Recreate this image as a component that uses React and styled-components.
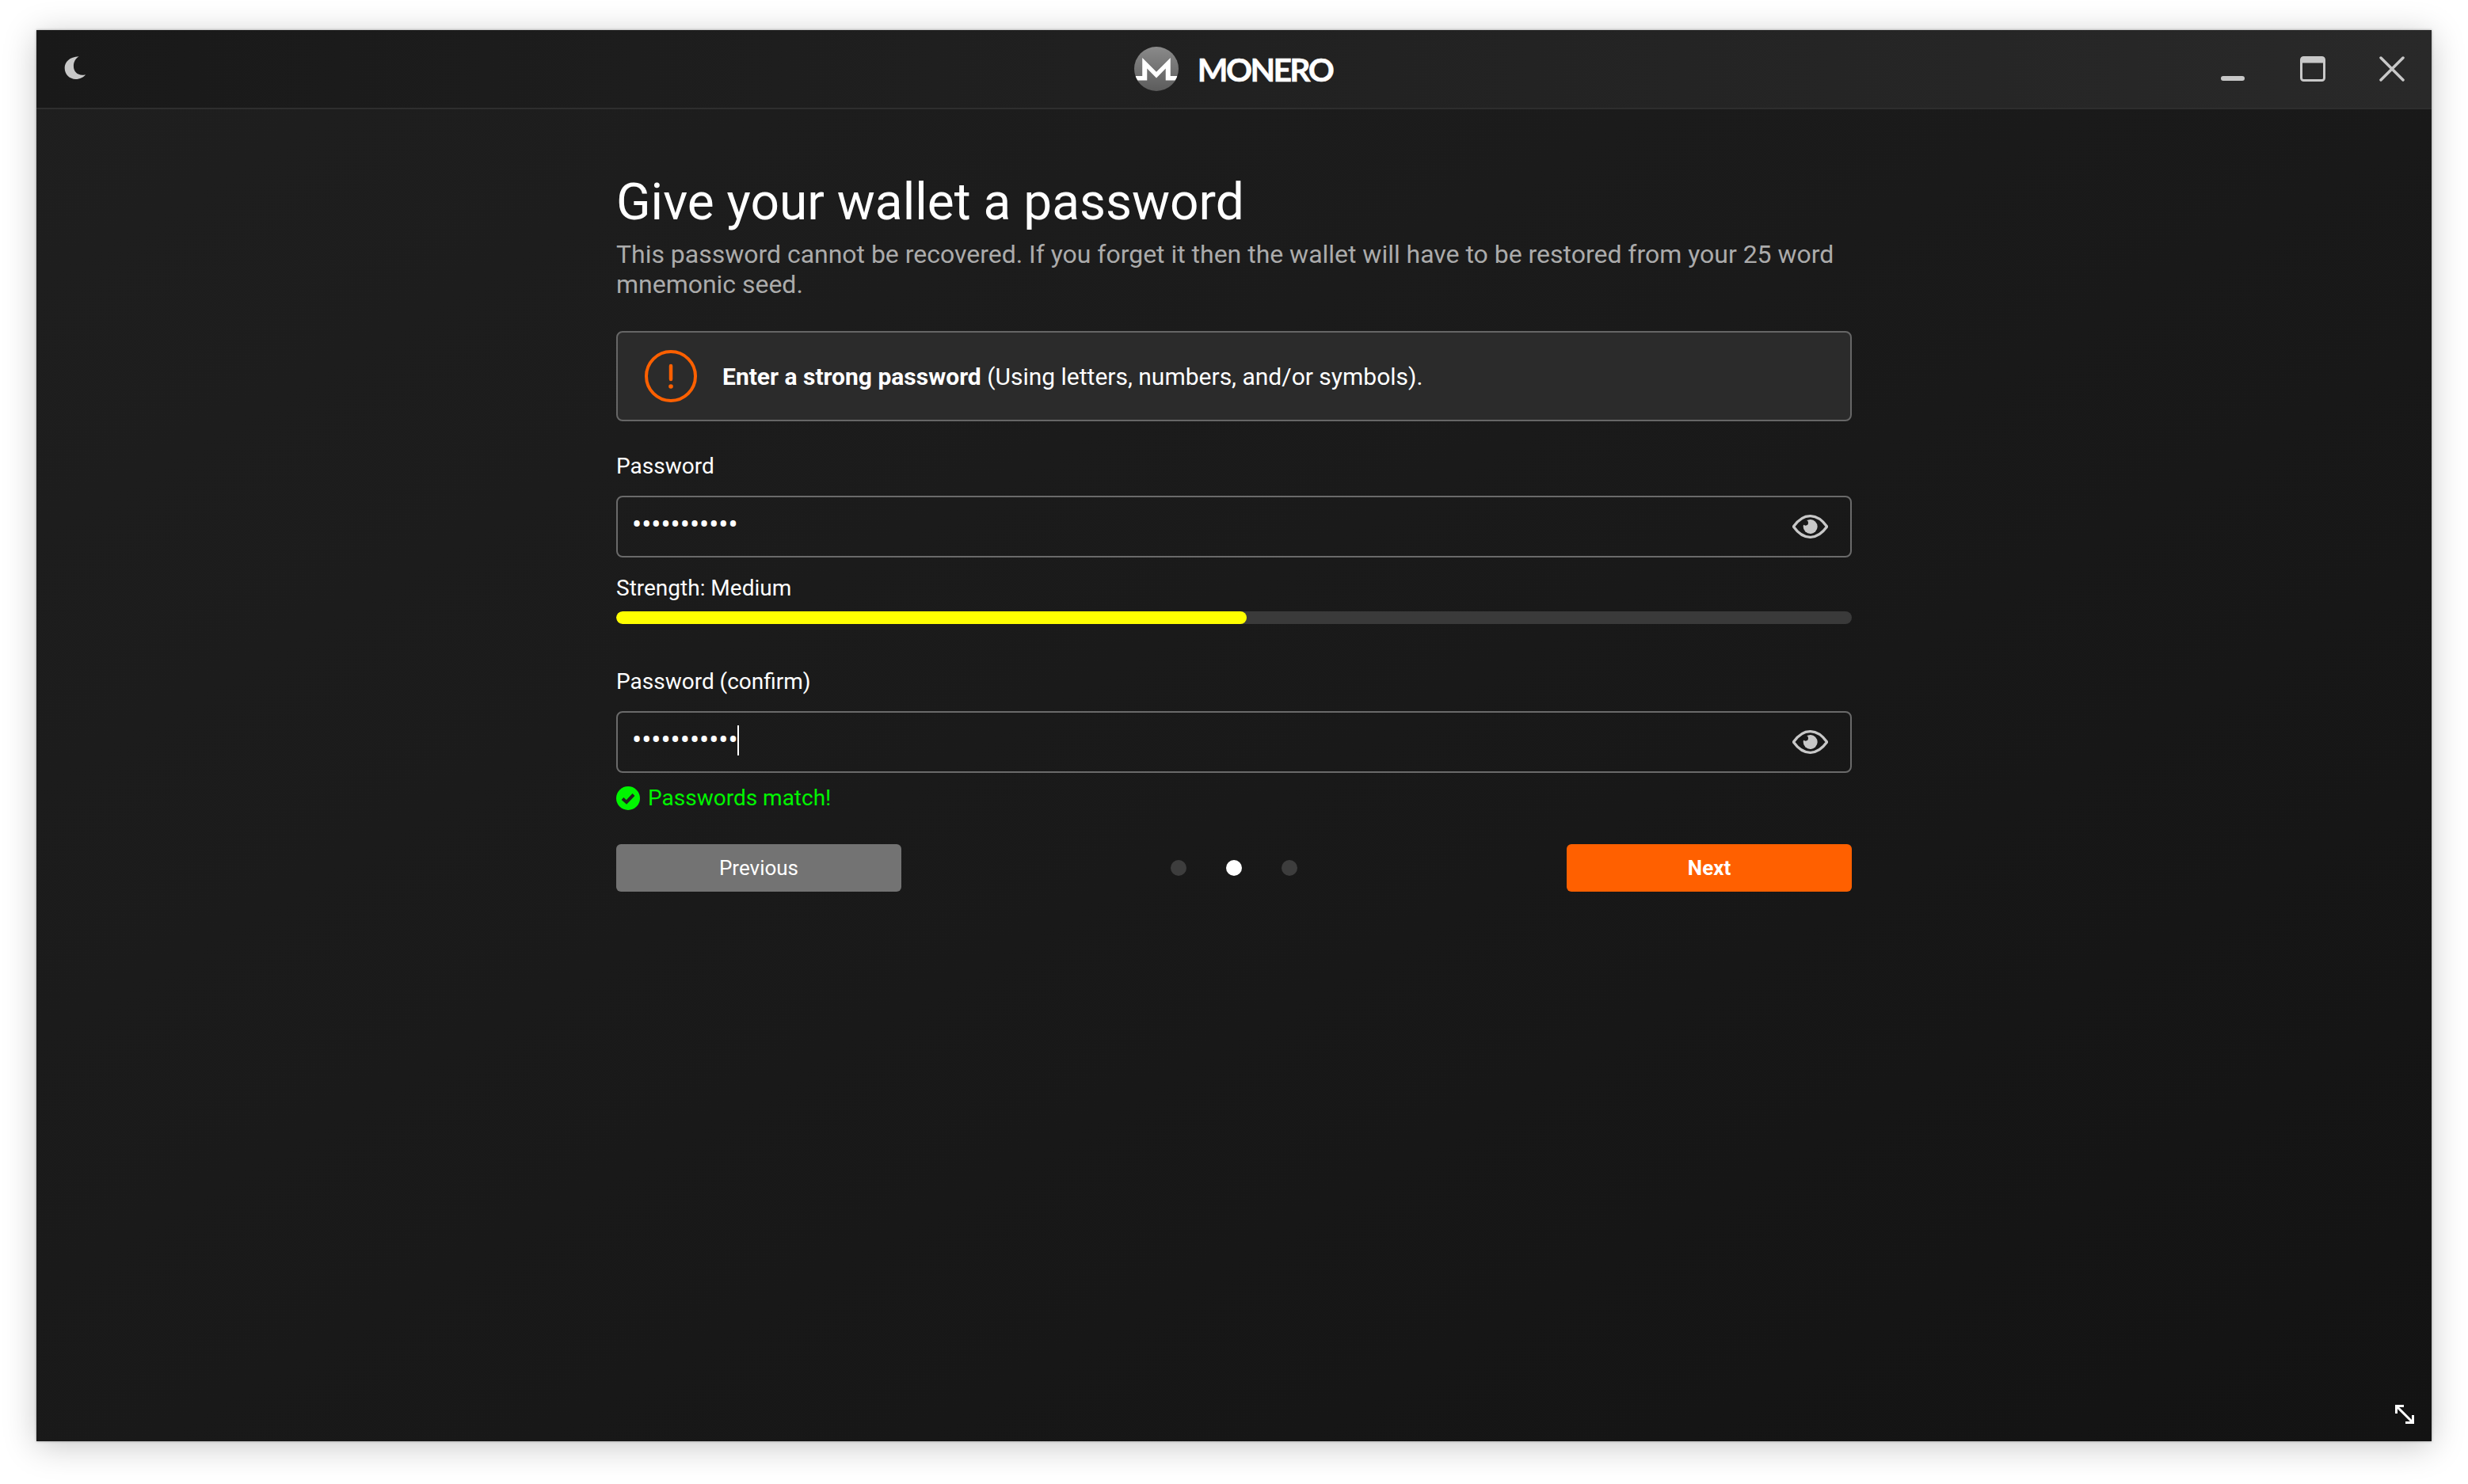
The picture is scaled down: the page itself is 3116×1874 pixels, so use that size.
import React from "react";
import styled, { createGlobalStyle } from "styled-components";

const Global = createGlobalStyle`
  html, body { margin: 0; padding: 0; background: #fff; }
  body { width: 3116px; height: 1874px; overflow: hidden; font-family: Roboto, "Liberation Sans", sans-serif; }
  #root { height: 100%; }
  * { box-sizing: border-box; }
`;

const Stage = styled.div`
  width: 3116px;
  height: 1874px;
  padding: 38px 46px 54px;
  background: #fff;
`;
const Win = styled.div`
  position: relative;
  height: 100%;
  display: flex;
  flex-direction: column;
  background: linear-gradient(150deg, #1f1f1f 0%, #1a1a1a 45%, #131313 100%);
  box-shadow: 0 6px 40px rgba(0, 0, 0, 0.22), 0 0 3px rgba(0, 0, 0, 0.35);
`;
const TitleBar = styled.header`
  height: 100px;
  flex: none;
  display: grid;
  grid-template-columns: 1fr auto 1fr;
  align-items: center;
  border-bottom: 2px solid #2e2e2e;
  background: linear-gradient(90deg, #191919 0%, #212121 50%, #292929 100%);
`;
const ThemeBtn = styled.button`
  justify-self: start;
  display: flex;
  margin: 0 0 3px 35px;
  padding: 0;
  border: 0;
  background: none;
`;
const Brand = styled.div`
  display: flex;
  align-items: center;
  gap: 24px;
  transform: translateX(-1px);
`;
const Wordmark = styled.span`
  font-family: Lato, sans-serif;
  font-weight: 700;
  font-size: 41px;
  line-height: 1;
  letter-spacing: -2.6px;
  color: #fff;
  -webkit-text-stroke: 0.5px #fff;
`;
const Controls = styled.div`
  justify-self: end;
  display: flex;
`;
const WinBtn = styled.button`
  width: 100px;
  height: 98px;
  display: flex;
  align-items: center;
  justify-content: center;
  padding: 0;
  border: 0;
  background: none;
`;
const Body = styled.main`
  width: 1560px;
  margin: 0 auto;
  padding-top: 80px;
`;
const Title = styled.h1`
  margin: 0 0 8px;
  font-size: 64px;
  line-height: 76px;
  font-weight: 400;
  color: #fff;
`;
const Sub = styled.p`
  margin: 0;
  font-size: 32px;
  line-height: 38px;
  font-weight: 400;
  letter-spacing: -0.02px;
  color: #ababab;
`;
const Alert = styled.div`
  margin-top: 40px;
  height: 114px;
  display: flex;
  align-items: center;
  gap: 32px;
  padding-left: 34px;
  background: #2b2b2b;
  border: 2px solid #666;
  border-radius: 8px;
`;
const AlertText = styled.p`
  margin: 0;
  font-size: 30px;
  color: #fff;
  b { font-weight: 700; }
`;
const Label = styled.div`
  margin-top: ${(p) => p.$mt}px;
  font-size: 28px;
  line-height: 34px;
  color: #fff;
`;
const Field = styled.div`
  margin-top: ${(p) => p.$mt}px;
  height: 78px;
  display: flex;
  align-items: center;
  justify-content: space-between;
  padding: 0 28px 0 18px;
  border: 2px solid #6a6a6a;
  border-radius: 8px;
`;
const Dots = styled.div`
  display: flex;
  align-items: center;
  font-size: 36px;
  line-height: 38px;
  color: #fff;
  transform: translateY(-2px);
`;
const Caret = styled.i`
  display: block;
  width: 2px;
  height: 38px;
  margin-left: -1px;
  background: #fff;
`;
const Track = styled.div`
  margin-top: 12px;
  height: 16px;
  border-radius: 8px;
  background: #3a3a3a;
  overflow: hidden;
`;
const Fill = styled.div`
  height: 100%;
  border-radius: 8px;
  background: #ffff00;
`;
const Match = styled.div`
  margin-top: 15px;
  display: flex;
  align-items: center;
  gap: 10px;
  font-size: 28px;
  line-height: 34px;
  color: #00f500;
`;
const Nav = styled.div`
  margin-top: 41px;
  display: flex;
  align-items: center;
  justify-content: space-between;
`;
const Btn = styled.button`
  width: 360px;
  height: 60px;
  padding: 0;
  border: 0;
  border-radius: 6px;
  font-family: Roboto, sans-serif;
  font-size: 26px;
  font-weight: ${(p) => (p.$primary ? 700 : 400)};
  color: #fff;
  background: ${(p) => (p.$primary ? "#ff6000" : "#737373")};
`;
const Pager = styled.div`
  display: flex;
  gap: 50px;
`;
const Dot = styled.span`
  width: 20px;
  height: 20px;
  border-radius: 50%;
  background: ${(p) => (p.$on ? "#fff" : "#3d3d3d")};
`;
const Resize = styled.svg`
  position: absolute;
  right: 22px;
  bottom: 22px;
`;

const Eye = () => (
  <svg width="45" height="30" viewBox="190 147 135 90" fill="none">
    <path d="M194 192C214 164 238 152 257 152C276 152 301 164 321 192C301 220 276 232 257 232C238 232 214 220 194 192Z" stroke="#c8c8c8" strokeWidth="10" />
    <circle cx="258" cy="192" r="27" fill="#c8c8c8" />
    <circle cx="240" cy="178" r="10" fill="#1a1a1a" />
  </svg>
);

const Logo = () => (
  <svg width="56" height="56" viewBox="97 90 166 167">
    <defs>
      <clipPath id="lc"><circle cx="180" cy="173.5" r="83" /></clipPath>
      <linearGradient id="lg" x1="0" y1="0" x2="0" y2="1">
        <stop offset="0" stopColor="#8a8a8a" />
        <stop offset="1" stopColor="#5c5c5c" />
      </linearGradient>
    </defs>
    <circle cx="180" cy="173.5" r="83.5" fill="url(#lg)" />
    <path clipPath="url(#lc)" fill="#fff" d="M90 200H127V132L180 185L233 132V200H270V217H215V172L180 208L145 172V217H90Z" />
  </svg>
);

export default function App() {
  return (
    <Stage>
      <Global />
      <Win>
        <TitleBar>
          <ThemeBtn aria-label="Theme">
            <svg width="28" height="31" viewBox="243 214 87 94">
              <path fill="#c8c8c8" d="M301 217C264 218 245 240 245 262C245 288 265 306 288 306C305 306 320 298 327 288C300 295 280 280 280 255C280 238 288 225 301 217Z" />
            </svg>
          </ThemeBtn>
          <Brand>
            <Logo />
            <Wordmark>MONERO</Wordmark>
          </Brand>
          <Controls>
            <WinBtn aria-label="Minimize">
              <svg width="32" height="34" viewBox="0 0 32 34"><rect x="0" y="26" width="30" height="6" rx="3" fill="#c8c8c8" /></svg>
            </WinBtn>
            <WinBtn aria-label="Maximize">
              <svg width="32" height="32" viewBox="0 0 32 32"><rect x="1.5" y="1.5" width="29" height="29" rx="3" fill="none" stroke="#c8c8c8" strokeWidth="3" /><rect x="1.5" y="1.5" width="29" height="7" fill="#c8c8c8" /></svg>
            </WinBtn>
            <WinBtn aria-label="Close">
              <svg width="32" height="32" viewBox="0 0 32 32"><path d="M2 2L30 30M30 2L2 30" stroke="#c8c8c8" strokeWidth="3.5" strokeLinecap="round" /></svg>
            </WinBtn>
          </Controls>
        </TitleBar>
        <Body>
          <Title>Give your wallet a password</Title>
          <Sub>This password cannot be recovered. If you forget it then the wallet will have to be restored from your 25 word mnemonic seed.</Sub>
          <Alert>
            <svg width="66" height="66" viewBox="0 0 66 66" fill="none">
              <circle cx="33" cy="33" r="31" stroke="#ff6000" strokeWidth="4" />
              <path d="M33 20V37" stroke="#ff6000" strokeWidth="4.5" strokeLinecap="round" />
              <circle cx="33" cy="46" r="2.8" fill="#ff6000" />
            </svg>
            <AlertText><b>Enter a strong password</b> (Using letters, numbers, and/or symbols).</AlertText>
          </Alert>
          <Label $mt={40}>Password</Label>
          <Field $mt={20}>
            <Dots>•••••••••••</Dots>
            <Eye />
          </Field>
          <Label $mt={22}>Strength: Medium</Label>
          <Track><Fill style={{ width: "51%" }} /></Track>
          <Label $mt={56}>Password (confirm)</Label>
          <Field $mt={20}>
            <Dots>•••••••••••<Caret /></Dots>
            <Eye />
          </Field>
          <Match>
            <svg width="30" height="30" viewBox="0 0 30 30">
              <circle cx="15" cy="15" r="15" fill="#00f500" />
              <path d="M8 15.5L13 20L22 10.5" fill="none" stroke="#222" strokeWidth="4" />
            </svg>
            Passwords match!
          </Match>
          <Nav>
            <Btn>Previous</Btn>
            <Pager><Dot /><Dot $on /><Dot /></Pager>
            <Btn $primary>Next</Btn>
          </Nav>
        </Body>
        <Resize width="24" height="24" viewBox="0 0 24 24" fill="none">
          <path d="M1.5 11V1.5H11M1.5 1.5L22.5 22.5M13 22.5H22.5V13" stroke="#fff" strokeWidth="3" />
        </Resize>
      </Win>
    </Stage>
  );
}
